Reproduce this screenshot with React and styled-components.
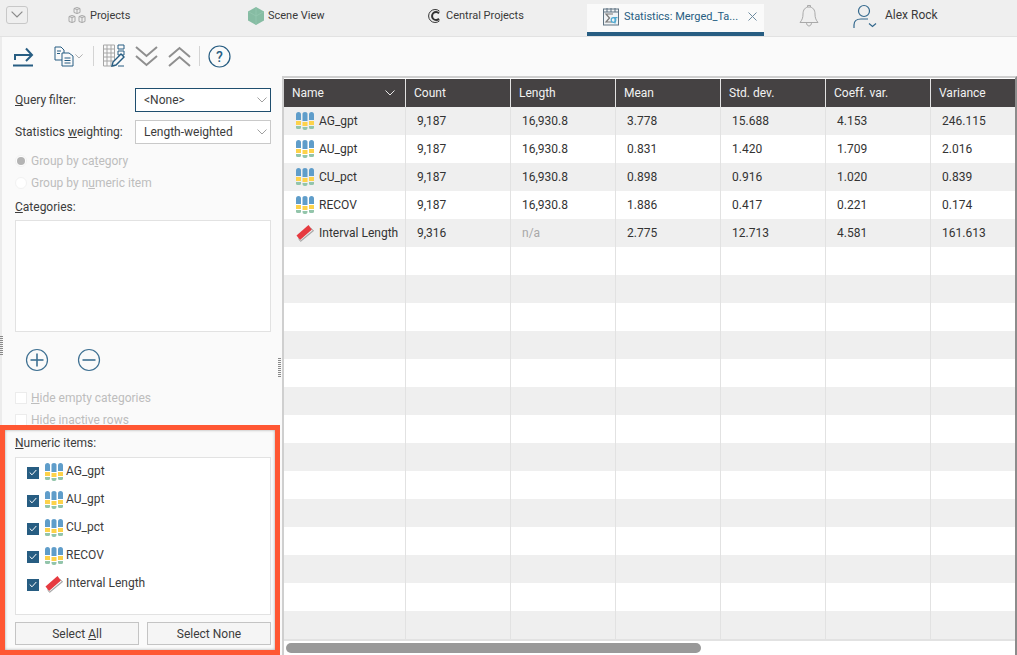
import styled, { createGlobalStyle } from 'styled-components';

const GlobalStyle = createGlobalStyle`
  html, body {
    margin: 0;
    padding: 0;
    background: #fff;
  }
  body {
    font-family: Roboto, "Liberation Sans", sans-serif;
    font-size: 12px;
    color: #333;
  }
`;

const Page = styled.div`
  position: relative;
  width: 1017px;
  height: 655px;
  overflow: hidden;
  display: flex;
  flex-direction: column;
`;

const TabBar = styled.header`
  height: 36px;
  flex: none;
  display: flex;
  background: #efefef;
  border-bottom: 1px solid #e2e2e2;
`;

const ExpandButton = styled.button`
  width: 22px;
  height: 18px;
  margin: 6px 0 0 6px;
  padding: 0;
  flex: none;
  display: flex;
  align-items: center;
  justify-content: center;
  background: #efefef;
  border: 1px solid #c8c8c8;
  border-radius: 3px;
`;

const Tab = styled.div`
  width: ${(p) => p.$width}px;
  flex: none;
  display: flex;
  align-items: center;
  gap: ${(p) => p.$gap || 5}px;
  height: 32px;
  padding-left: ${(p) => p.$pad}px;
  box-sizing: border-box;
  color: #3a3a3a;
  font-size: 11px;
  margin-bottom: 2px;
`;

const TabText = styled.span`
  margin-top: -2px;
`;

const ActiveTab = styled.div`
  width: 177px;
  height: 32px;
  margin-top: 4px;
  flex: none;
  box-sizing: border-box;
  display: flex;
  align-items: center;
  padding: 0 7px 3px 16px;
  gap: 5px;
  background: #fafafa;
  border-bottom: 4px solid #275d82;
  color: #275d82;
  font-size: 11px;
  white-space: nowrap;
`;

const CloseMark = styled.span`
  margin-left: auto;
  display: flex;
`;

const UserName = styled(TabText)`
  font-size: 12px;
  color: #3a3a3a;
`;

const Body = styled.div`
  flex: 1;
  display: flex;
  min-height: 0;
  background: #fafafa;
  border-left: 2px solid #ececec;
`;

const SidePanel = styled.aside`
  width: 280px;
  flex: none;
  display: flex;
  flex-direction: column;
  padding-left: 13px;
  box-sizing: border-box;
`;

const Toolbar = styled.div`
  height: 40px;
  box-sizing: border-box;
  padding-bottom: 2px;
  display: flex;
  align-items: center;
  margin-left: -3px;
`;

const ToolIcon = styled.span`
  display: flex;
  margin-left: ${(p) => p.$left || 0}px;
`;

const ToolDivider = styled.span`
  width: 1px;
  height: 20px;
  margin-left: ${(p) => p.$left}px;
  background: #d4d4d4;
`;

const FieldRow = styled.div`
  display: flex;
  align-items: center;
  justify-content: space-between;
  width: 256px;
  height: 24px;
  margin-top: ${(p) => p.$top}px;
`;

const FieldLabel = styled.label`
  color: #3c3c3c;
  font-size: 12px;
`;

const Key = styled.span`
  text-decoration: underline;
  text-underline-offset: 1px;
`;

const SelectBox = styled.div`
  width: 136px;
  height: 24px;
  box-sizing: border-box;
  display: flex;
  align-items: center;
  justify-content: space-between;
  padding: 0 3px 1px 8px;
  background: #fff;
  border: 1px solid ${(p) => (p.$focused ? '#1f4e6e' : '#c9c9c9')};
  color: #3c3c3c;
  font-size: 12px;
`;

const OptionRow = styled.div`
  height: 22px;
  display: flex;
  align-items: center;
  gap: 4px;
  color: #bdbdbd;
  font-size: 12px;
  margin-top: ${(p) => p.$top || 0}px;
`;

const RadioDot = styled.span`
  width: 12px;
  height: 12px;
  box-sizing: border-box;
  border-radius: 50%;
  background: #fff;
  border: 1px solid #f2f2f2;
  display: flex;
  align-items: center;
  justify-content: center;
  &::after {
    content: '';
    width: 8px;
    height: 8px;
    border-radius: 50%;
    background: ${(p) => (p.$on ? '#b4b4b4' : 'transparent')};
  }
`;

const EmptyCheck = styled.span`
  width: 10px;
  height: 10px;
  background: #fff;
  border: 1px solid #ececec;
`;

const SectionLabel = styled.div`
  font-size: 12px;
  color: #3c3c3c;
  height: 14px;
  line-height: 14px;
  margin-top: ${(p) => p.$top}px;
`;

const ListBox = styled.div`
  width: 256px;
  height: ${(p) => p.$height}px;
  box-sizing: border-box;
  margin-top: ${(p) => p.$top}px;
  background: #fff;
  border: 1px solid #e2e2e2;
  padding-top: ${(p) => p.$pad || 0}px;
`;

const RoundButtons = styled.div`
  display: flex;
  gap: 28px;
  padding-left: 10px;
  margin-top: 16px;
  height: 24px;
`;

const CheckRow = styled.div`
  height: 28px;
  display: flex;
  align-items: center;
  padding-left: 11px;
  color: #3c3c3c;
  font-size: 12px;
`;

const TickBox = styled.span`
  width: 12px;
  height: 12px;
  background: #275d82;
  display: flex;
  align-items: center;
  justify-content: center;
  margin-right: 6px;
  margin-top: 1px;
`;

const ItemLabel = styled.span`
  margin-left: 3px;
  margin-top: -2px;
`;

const ButtonRow = styled.div`
  display: flex;
  justify-content: space-between;
  width: 256px;
  margin-top: 7px;
`;

const PlainButton = styled.button`
  width: 124px;
  height: 23px;
  padding: 0;
  background: #f5f5f5;
  border: 1px solid #c4c4c4;
  color: #3c3c3c;
  font-family: inherit;
  font-size: 12px;
`;

const Sash = styled.span`
  position: absolute;
  left: ${(p) => p.$left}px;
  top: ${(p) => p.$top}px;
  width: 3px;
  height: 20px;
  background-image: repeating-linear-gradient(#8a8a8a 0 1px, transparent 1px 2px);
`;

const Highlight = styled.div`
  position: absolute;
  left: 0;
  top: 425px;
  width: 280px;
  height: 230px;
  box-sizing: border-box;
  border: 5px solid #ff5733;
  box-shadow: inset 0 0 3px rgba(0, 0, 0, 0.35);
  pointer-events: none;
`;

const TableArea = styled.main`
  flex: 1;
  min-width: 0;
  display: flex;
  flex-direction: column;
  padding-top: 1px;
  border-left: 2px solid #cfcfcf;
  background: #fff;
  margin-top: 39px;
  border-top: 2px solid #cfcfcf;
  border-right: 2px solid #8c8c8c;
`;

const Grid = styled.div`
  flex: 1;
  display: grid;
  grid-template-columns: 121px repeat(5, 104px) 84px;
  grid-auto-rows: 28px;
  column-gap: 1px;
  overflow: hidden;
  background: #e2e2e2;
  align-content: start;
  border-bottom: 1px solid #e2e2e2;
`;

const HeadCell = styled.div`
  background: #454243;
  color: #f2f2f2;
  font-size: 12px;
  display: flex;
  align-items: center;
  justify-content: space-between;
  padding: 0 10px 0 8px;
  height: 28px;
`;

const Cell = styled.div`
  background: ${(p) => (p.$shade ? '#efefef' : '#fff')};
  color: ${(p) => (p.$muted ? '#a8a8a8' : '#333')};
  font-size: 12px;
  display: flex;
  align-items: center;
  gap: 5px;
  padding-left: ${(p) => (p.$name ? 12 : 11)}px;
  height: 28px;
`;

const ScrollTrack = styled.div`
  height: 14px;
  flex: none;
  background: #fff;
  display: flex;
  align-items: center;
  padding-left: 2px;
`;

const ScrollThumb = styled.div`
  width: 415px;
  height: 10px;
  border-radius: 5px;
  background: #999;
`;

const ColumnsIcon = () => (
  <svg width="18" height="18" viewBox="0 0 18 18">
    <path d="M0 2.500a2.500 2.500 0 0 1 5 0V8H0z" fill="#5f9dca" />
    <path d="M6.500 1.500a2.500 1.500 0 0 1 5 0V9h-5z" fill="#5f9dca" />
    <path d="M13 2.500a2.500 2.500 0 0 1 5 0V8h-5z" fill="#5f9dca" />
    <path d="M0 9h5v4H0zM6.500 10h5v4h-5zM13 9h5v4h-5z" fill="#fdd24a" />
    <path d="M0 14h5v1.500a1.500 1.500 0 0 1-1.500 1.500h-2A1.500 1.500 0 0 1 0 15.500z" fill="#93c5ab" />
    <path d="M6.500 15h5v1a2 2 0 0 1-2 2h-1a2 2 0 0 1-2-2z" fill="#93c5ab" />
    <path d="M13 14h5v1.500a1.500 1.500 0 0 1-1.500 1.500h-2a1.500 1.500 0 0 1-1.500-1.500z" fill="#93c5ab" />
  </svg>
);

const RulerIcon = () => (
  <svg width="18" height="18" viewBox="0 0 18 18">
    <path d="M.5 11.500 12.500 1l3.500 4.500L4 16z" fill="#e63a40" />
    <path d="M4.500 17.200 17.500 6.500" stroke="#a9a9a9" strokeWidth="1.200" fill="none" />
    <path d="M2.500 14.500 4.500 17.500M15 4 17.500 7" stroke="#a9a9a9" strokeWidth="1" fill="none" />
  </svg>
);

const Chevron = ({ color = '#a0a0a0', size = 10 }) => (
  <svg width={size} height={size * 0.6} viewBox="0 0 10 6">
    <path d="M.5.500 5 5 9.500.500" fill="none" stroke={color} strokeWidth="1" />
  </svg>
);

const ProjectsIcon = () => (
  <svg width="18" height="18" viewBox="0 0 18 18" fill="none" stroke="#a8a8a8" strokeWidth="1">
    <path d="M6 1.500 9 .5l3 1v4l-3 1-3-1zM6 1.500l3 1 3-1M9 2.500v4" />
    <path d="M1 9.500l3-1 3 1v5l-3 1-3-1zM1 9.500l3 1 3-1M4 10.500v5" />
    <path d="M11 9.500l3-1 3 1v5l-3 1-3-1zM11 9.500l3 1 3-1M14 10.500v5" />
  </svg>
);

const SceneIcon = () => (
  <svg width="18" height="18" viewBox="0 0 18 18">
    <path d="M9 0l8 4.500v9L9 18l-8-4.500v-9z" fill="#86bca3" />
    <path d="M9 0v9l8-4.500M9 9l-8-4.500M9 9v9" stroke="#97c8b1" strokeWidth=".7" fill="none" />
  </svg>
);

const CentralIcon = () => (
  <svg width="14" height="16" viewBox="0 0 14 16" fill="none" stroke="#333">
    <path d="M12.500 3.200A6.500 6.500 0 1 0 12.500 12.800" strokeWidth="1" />
    <path d="M12 5.300A4 4 0 1 0 12 10.700" strokeWidth="2" />
  </svg>
);

const StatsIcon = () => (
  <svg width="16" height="18" viewBox="0 0 16 18" fill="none">
    <rect x=".5" y="1" width="15" height="16" stroke="#5f7382" fill="#f0f3f5" />
    <path d="M.5 4h15M4 0v4M8 0v4M12 0v4" stroke="#5f7382" />
    <path d="M10 6H3l3.500 4L3 14h6" stroke="#777" strokeWidth="1.200" />
    <circle cx="10.500" cy="12" r="2.300" stroke="#4fa8d0" strokeWidth="1.200" />
    <path d="M10.500 9.700H14.500M12 10v5.500" stroke="#4fa8d0" strokeWidth="1.200" />
  </svg>
);

const BellIcon = () => (
  <svg width="20" height="24" viewBox="0 0 20 24" fill="none" stroke="#a9a9a9" strokeWidth="1">
    <path d="M10 3c-4 0-6 3-6 7 0 4-1 6-3 8.500h18c-2-2.500-3-4.500-3-8.500 0-4-2-7-6-7z" />
    <path d="M8.500 3V1.500h3V3M7.500 18.500c0 2 1 3.500 2.500 3.500s2.500-1.500 2.500-3.500" />
  </svg>
);

const UserIcon = () => (
  <svg width="25" height="24" viewBox="0 0 25 24" fill="none" stroke="#33688d" strokeWidth="1.200">
    <circle cx="11" cy="7" r="5.500" />
    <path d="M1 24v-3c0-4 3-6 7-6h7" />
    <path d="M16 19.500l3.500 3 3.500-3" />
  </svg>
);

const ExportIcon = () => (
  <svg width="22" height="22" viewBox="0 0 22 22" fill="none" stroke="#275d82" strokeWidth="2">
    <path d="M1 20.500h20" />
    <path d="M3 15v-5h16M14 3.500l6 6.500-6 6" />
  </svg>
);

const CopyIcon = () => (
  <svg width="20" height="22" viewBox="0 0 20 22" fill="none" stroke="#275d82" strokeWidth="1">
    <path d="M1 2h6l3 3v10H1z" fill="#fafafa" />
    <path d="M8 8h7l4 3v10H8z" fill="#fafafa" />
    <path d="M3 6h4M3 8.500h3M10.500 13h6M10.500 15.500h6M10.500 18h6" />
  </svg>
);

const ColumnEditIcon = () => (
  <svg width="22" height="24" viewBox="0 0 22 24" fill="none">
    <path d="M.5 1h11v21H.5zM.5 5h11M.5 9h11M.5 13h11M.5 17h11M4 1v21M8 1v21" stroke="#a6a6a6" />
    <path d="M15 1h6v4h-6zM15 7h6v4h-6z" stroke="#275d82" />
    <path d="M9 22l1-4 8-8 3 3-8 8z" fill="#fafafa" stroke="#275d82" strokeWidth="1.400" />
    <path d="M15 22h6" stroke="#275d82" />
  </svg>
);

const DoubleChevron = ({ up }) => (
  <svg width="23" height="21" viewBox="0 0 23 21" fill="none" stroke="#8f8f8f" strokeWidth="2" transform={up ? 'scale(1,-1)' : undefined}>
    <path d="M1 1l10.500 9L22 1" />
    <path d="M1 10l10.500 9L22 10" />
  </svg>
);

const HelpIcon = () => (
  <svg width="23" height="23" viewBox="0 0 23 23">
    <circle cx="11.500" cy="11.500" r="10.500" fill="none" stroke="#275d82" strokeWidth="1.200" />
    <text x="11.500" y="16.500" textAnchor="middle" fontFamily="Roboto, sans-serif" fontSize="14" fontWeight="500" fill="#275d82">?</text>
  </svg>
);

const RoundIcon = ({ plus }) => (
  <svg width="24" height="24" viewBox="0 0 24 24" fill="none" stroke="#3e7092" strokeWidth="1.200">
    <circle cx="12" cy="12" r="10.500" />
    <path d="M5.500 12h13" strokeWidth="1.600" />
    {plus && <path d="M12 5.500v13" strokeWidth="1.600" />}
  </svg>
);

const TickIcon = () => (
  <svg width="8" height="7" viewBox="0 0 8 7">
    <path d="M.7 3.500 3 5.800 7.300 1" fill="none" stroke="#fff" strokeWidth="1" />
  </svg>
);

const columns = ['Name', 'Count', 'Length', 'Mean', 'Std. dev.', 'Coeff. var.', 'Variance'];

const rows = [
  ['AG_gpt', '9,187', '16,930.8', '3.778', '15.688', '4.153', '246.115'],
  ['AU_gpt', '9,187', '16,930.8', '0.831', '1.420', '1.709', '2.016'],
  ['CU_pct', '9,187', '16,930.8', '0.898', '0.916', '1.020', '0.839'],
  ['RECOV', '9,187', '16,930.8', '1.886', '0.417', '0.221', '0.174'],
  ['Interval Length', '9,316', 'n/a', '2.775', '12.713', '4.581', '161.613'],
];

const tableRows = Array.from({ length: 19 }, (_, i) => rows[i] || ['', '', '', '', '', '', '']);

const itemIcon = (name) => (name === 'Interval Length' ? <RulerIcon /> : <ColumnsIcon />);

export default function App() {
  return (
    <Page>
      <GlobalStyle />
      <TabBar>
        <ExpandButton>
          <Chevron color="#8a8a8a" size={12} />
        </ExpandButton>
        <Tab $width={219} $pad={40} $gap={4}>
          <ProjectsIcon />
          <TabText>Projects</TabText>
        </Tab>
        <Tab $width={180} $pad={0} $gap={3}>
          <SceneIcon />
          <TabText>Scene View</TabText>
        </Tab>
        <Tab $width={160} $pad={0} $gap={5}>
          <CentralIcon />
          <TabText>Central Projects</TabText>
        </Tab>
        <ActiveTab>
          <StatsIcon />
          Statistics: Merged_Ta...
          <CloseMark>
            <svg width="9" height="9" viewBox="0 0 9 9">
              <path d="M.5.500l8 8M8.500.500l-8 8" stroke="#6d8ba0" />
            </svg>
          </CloseMark>
        </ActiveTab>
        <Tab $width={66} $pad={35}>
          <BellIcon />
        </Tab>
        <Tab $width={120} $pad={23} $gap={7}>
          <UserIcon />
          <UserName>Alex Rock</UserName>
        </Tab>
      </TabBar>

      <Body>
        <SidePanel>
          <Toolbar>
            <ToolIcon><ExportIcon /></ToolIcon>
            <ToolIcon $left={20}><CopyIcon /></ToolIcon>
            <ToolIcon $left={1}><Chevron size={8} /></ToolIcon>
            <ToolDivider $left={10} />
            <ToolIcon $left={9}><ColumnEditIcon /></ToolIcon>
            <ToolIcon $left={10}><DoubleChevron /></ToolIcon>
            <ToolIcon $left={10}><DoubleChevron up /></ToolIcon>
            <ToolDivider $left={8} />
            <ToolIcon $left={8}><HelpIcon /></ToolIcon>
          </Toolbar>

          <FieldRow $top={11}>
            <FieldLabel><Key>Q</Key>uery filter:</FieldLabel>
            <SelectBox $focused>
              &lt;None&gt;
              <Chevron />
            </SelectBox>
          </FieldRow>
          <FieldRow $top={8}>
            <FieldLabel>Statistics <Key>w</Key>eighting:</FieldLabel>
            <SelectBox>
              Length-weighted
              <Chevron />
            </SelectBox>
          </FieldRow>

          <OptionRow $top={6}>
            <RadioDot $on />
            <span>Group by ca<Key>t</Key>egory</span>
          </OptionRow>
          <OptionRow>
            <RadioDot />
            <span>Group by n<Key>u</Key>meric item</span>
          </OptionRow>

          <SectionLabel $top={6}><Key>C</Key>ategories:</SectionLabel>
          <ListBox $top={6} $height={112} />

          <RoundButtons>
            <RoundIcon plus />
            <RoundIcon />
          </RoundButtons>

          <OptionRow $top={15}>
            <EmptyCheck />
            <span><Key>H</Key>ide empty categories</span>
          </OptionRow>
          <OptionRow>
            <EmptyCheck />
            <span>Hide inactive rows</span>
          </OptionRow>

          <SectionLabel $top={5}><Key>N</Key>umeric items:</SectionLabel>
          <ListBox $top={7} $height={158}>
            {rows.map((row) => (
              <CheckRow key={row[0]}>
                <TickBox><TickIcon /></TickBox>
                {itemIcon(row[0])}
                <ItemLabel>{row[0]}</ItemLabel>
              </CheckRow>
            ))}
          </ListBox>
          <ButtonRow>
            <PlainButton>Select <Key>A</Key>ll</PlainButton>
            <PlainButton>Select None</PlainButton>
          </ButtonRow>
        </SidePanel>

        <TableArea>
          <Grid>
            {columns.map((name, i) => (
              <HeadCell key={name}>
                {name}
                {i === 0 && <Chevron color="#e8e8e8" />}
              </HeadCell>
            ))}
            {tableRows.map((row, r) =>
              row.map((value, c) => (
                <Cell key={`${r}-${c}`} $shade={r % 2 === 0} $name={c === 0} $muted={value === 'n/a'}>
                  {c === 0 && value && itemIcon(value)}
                  {value}
                </Cell>
              ))
            )}
          </Grid>
          <ScrollTrack>
            <ScrollThumb />
          </ScrollTrack>
        </TableArea>
      </Body>

      <Sash $left={0} $top={336} />
      <Sash $left={278} $top={358} />
      <Highlight />
    </Page>
  );
}
